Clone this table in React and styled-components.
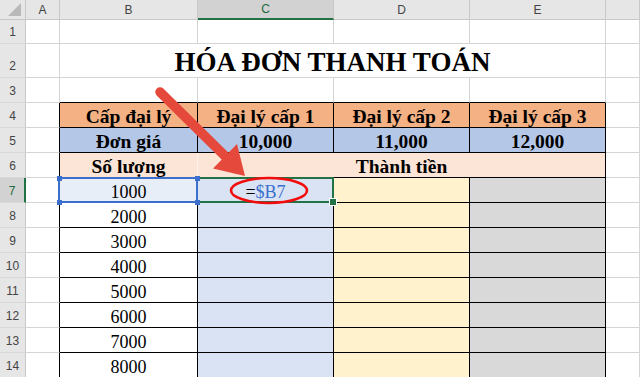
import React from "react";
import styled, { createGlobalStyle } from "styled-components";

const GRID = "#d4d4d4";
const INK = "#000";
const HEAD_LINE = "#c8c8c8";
const GREEN = "#217346";
const REF_BLUE = "#3b6fcb";

const GlobalStyle = createGlobalStyle`
  * { box-sizing: border-box; }
  body {
    margin: 0;
    background: #fff;
  }
`;

const Sheet = styled.div`
  position: relative;
  display: grid;
  grid-template-columns: 26px 34px 138px 136px 136px 136px 34px;
  grid-template-rows: 20px 24px 34px repeat(12, 25px);
  width: 640px;
  height: 377px;
  overflow: hidden;
  font-family: "Liberation Serif", "Times New Roman", serif;
  color: #000;
`;

const Corner = styled.div`
  display: flex;
  align-items: flex-end;
  justify-content: flex-end;
  padding: 0 3px 3px 0;
  background: #e6e6e6;
  border-right: 1px solid ${HEAD_LINE};
  border-bottom: 1px solid ${HEAD_LINE};
`;

const ColHead = styled.div`
  display: flex;
  align-items: center;
  justify-content: center;
  background: ${(p) => (p.$active ? "#d2d2d2" : "#e6e6e6")};
  color: ${(p) => (p.$active ? "#1d6a40" : "#444")};
  border-right: 1px solid ${HEAD_LINE};
  border-bottom: ${(p) => (p.$active ? `2px solid ${GREEN}` : `1px solid ${HEAD_LINE}`)};
  font: 12px "Liberation Sans", Arial, sans-serif;
`;

const RowHead = styled.div`
  display: flex;
  align-items: flex-end;
  justify-content: center;
  padding-bottom: 5px;
  background: ${(p) => (p.$active ? "#d2d2d2" : "#e6e6e6")};
  color: ${(p) => (p.$active ? "#1d6a40" : "#444")};
  border-right: ${(p) => (p.$active ? `2px solid ${GREEN}` : `1px solid ${HEAD_LINE}`)};
  border-bottom: 1px solid #d9d9d9;
  font: 12px/1 "Liberation Sans", Arial, sans-serif;
`;

const Cell = styled.div`
  position: relative;
  grid-column: span ${(p) => p.$span || 1};
  display: flex;
  align-items: flex-end;
  justify-content: center;
  padding-bottom: 1px;
  background: ${(p) => p.$bg || "#fff"};
  border-right: 1px solid ${(p) => p.$r || GRID};
  border-bottom: 1px solid ${(p) => p.$b || GRID};
  font-size: ${(p) => p.$size || (p.$bold ? 19.5 : 18)}px;
  font-weight: ${(p) => (p.$bold ? 700 : 400)};
  line-height: 1;
  white-space: nowrap;
`;

const RefBox = styled.div`
  position: absolute;
  left: -2px;
  top: -1px;
  right: -1px;
  bottom: -1px;
  border: 2px solid ${REF_BLUE};
  z-index: 3;
  pointer-events: none;
`;

const RefDot = styled.span`
  position: absolute;
  width: 5px;
  height: 5px;
  background: ${REF_BLUE};
  left: ${(p) => (p.$x === "l" ? "-3.5px" : "auto")};
  right: ${(p) => (p.$x === "r" ? "-3.5px" : "auto")};
  top: ${(p) => (p.$y === "t" ? "-3.5px" : "auto")};
  bottom: ${(p) => (p.$y === "b" ? "-3.5px" : "auto")};
`;

const ActiveBox = styled.div`
  position: absolute;
  left: -2px;
  top: -1px;
  right: -1px;
  bottom: -1px;
  border: 2px solid ${GREEN};
  z-index: 2;
  pointer-events: none;
`;

const FillHandle = styled.span`
  position: absolute;
  right: -4px;
  bottom: -4px;
  width: 6px;
  height: 6px;
  background: ${GREEN};
  outline: 1px solid #fff;
`;

const RefText = styled.span`
  color: ${REF_BLUE};
`;

const Marks = styled.svg`
  position: absolute;
  left: 0;
  top: 0;
  z-index: 4;
  pointer-events: none;
`;

const ORANGE = "#f4b183";
const BLUE = "#b4c7e7";
const PEACH = "#fce4d6";
const LAVENDER = "#dae3f3";
const CREAM = "#fff2cc";
const GREY = "#d9d9d9";

const quantities = [1000, 2000, 3000, 4000, 5000, 6000, 7000, 8000];

function Blank(props) {
  return <Cell {...props} />;
}

function App() {
  return (
    <>
      <GlobalStyle />
      <Sheet>
        <Corner>
          <svg width="14" height="13" viewBox="0 0 14 13">
            <polygon points="13,0 13,13 0,13" fill="#b9b9b9" />
          </svg>
        </Corner>
        <ColHead>A</ColHead>
        <ColHead>B</ColHead>
        <ColHead $active>C</ColHead>
        <ColHead>D</ColHead>
        <ColHead>E</ColHead>
        <ColHead />

        {/* row 1 */}
        <RowHead>1</RowHead>
        <Blank />
        <Blank />
        <Blank />
        <Blank />
        <Blank />
        <Blank />

        {/* row 2: title */}
        <RowHead>2</RowHead>
        <Blank />
        <Cell $span={4} $size={27} $bold>
          HÓA ĐƠN THANH TOÁN
        </Cell>
        <Blank />

        {/* row 3 */}
        <RowHead>3</RowHead>
        <Blank />
        <Blank $b={INK} />
        <Blank $b={INK} />
        <Blank $b={INK} />
        <Blank $b={INK} />
        <Blank />

        {/* row 4: agent levels */}
        <RowHead>4</RowHead>
        <Blank $r={INK} />
        <Cell $bg={ORANGE} $r={INK} $b={INK} $bold>Cấp đại lý</Cell>
        <Cell $bg={ORANGE} $r={INK} $b={INK} $bold>Đại lý cấp 1</Cell>
        <Cell $bg={ORANGE} $r={INK} $b={INK} $bold>Đại lý cấp 2</Cell>
        <Cell $bg={ORANGE} $r={INK} $b={INK} $bold>Đại lý cấp 3</Cell>
        <Blank />

        {/* row 5: unit prices */}
        <RowHead>5</RowHead>
        <Blank $r={INK} />
        <Cell $bg={BLUE} $r={INK} $b={INK} $bold>Đơn giá</Cell>
        <Cell $bg={BLUE} $r={INK} $b={INK} $bold>10,000</Cell>
        <Cell $bg={BLUE} $r={INK} $b={INK} $bold>11,000</Cell>
        <Cell $bg={BLUE} $r={INK} $b={INK} $bold>12,000</Cell>
        <Blank />

        {/* row 6 */}
        <RowHead>6</RowHead>
        <Blank $r={INK} />
        <Cell $bg={PEACH} $r="#fdf1ea" $b={INK} $bold>Số lượng</Cell>
        <Cell $span={3} $bg={PEACH} $r={INK} $b={INK} $bold>Thành tiền</Cell>
        <Blank />

        {quantities.map((q, i) => {
          const first = i === 0;
          return (
            <React.Fragment key={q}>
              <RowHead $active={first}>{i + 7}</RowHead>
              <Blank $r={INK} />
              <Cell $bg={first ? "#e8eef8" : "#fff"} $r={INK} $b={INK}>
                {q}
                {first && (
                  <RefBox>
                    <RefDot $x="l" $y="t" />
                    <RefDot $x="r" $y="t" />
                    <RefDot $x="l" $y="b" />
                    <RefDot $x="r" $y="b" />
                  </RefBox>
                )}
              </Cell>
              <Cell $bg={LAVENDER} $r={INK} $b={INK}>
                {first && (
                  <>
                    =<RefText>$B7</RefText>
                    <ActiveBox>
                      <FillHandle />
                    </ActiveBox>
                  </>
                )}
              </Cell>
              <Cell $bg={CREAM} $r={INK} $b={INK} />
              <Cell $bg={GREY} $r={INK} $b={INK} />
              <Blank />
            </React.Fragment>
          );
        })}

        <Marks width="640" height="377" viewBox="0 0 640 377">
          {/* pointer arrow */}
          <line
            x1="160"
            y1="92"
            x2="227"
            y2="158"
            stroke="#e5493b"
            strokeWidth="9.5"
            strokeLinecap="round"
          />
          <polygon points="245,176 213,168.5 237,144" fill="#e5493b" />
          {/* circled formula */}
          <ellipse
            cx="269"
            cy="190.5"
            rx="38"
            ry="12.5"
            fill="none"
            stroke="#f20d0d"
            strokeWidth="2.6"
          />
        </Marks>
      </Sheet>
    </>
  );
}

export default App;
